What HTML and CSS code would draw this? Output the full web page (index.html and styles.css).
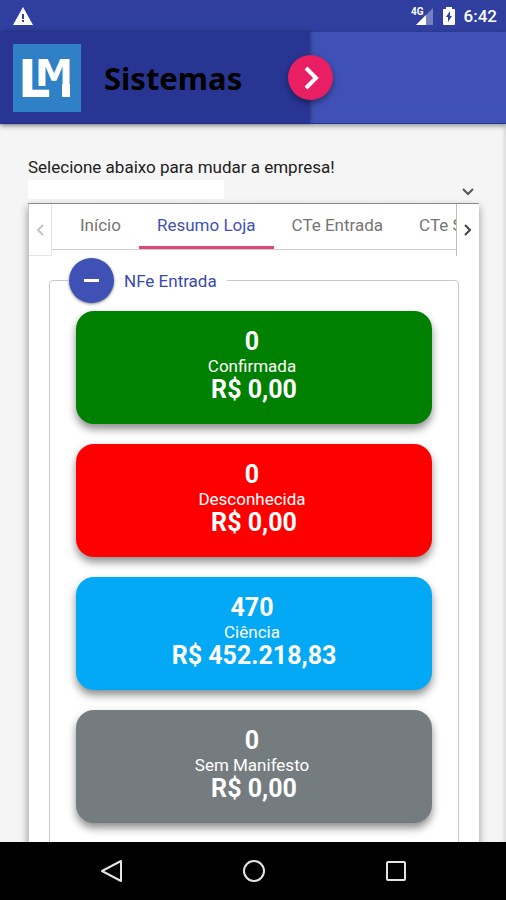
FILE: index.html
```html
<!DOCTYPE html>
<html lang="pt-BR">
<head>
<meta charset="utf-8">
<meta name="viewport" content="width=device-width, initial-scale=1">
<title>LM Sistemas</title>
<link rel="stylesheet" href="styles.css">
</head>
<body>
<div class="status">
  <svg class="status-warning" width="20" height="18" viewBox="0 0 20 18" aria-hidden="true"><path fill="#fff" d="M10 0 20 18H0z"/><path fill="#303f9f" d="M9 7h2v5H9zM9 13h2v2H9z"/></svg>
  <div class="status-right">
    <svg width="23" height="20" viewBox="0 0 23 20" aria-hidden="true"><path fill="#7580c0" d="M22 2v17H5z"/><path fill="#fff" d="M15 9v10H5z"/><text class="network" x="0" y="9">4G</text></svg>
    <svg width="12" height="18" viewBox="0 0 12 18" aria-hidden="true"><path fill="#fff" d="M3 0h6v2h2q1 0 1 1v14q0 1-1 1H1q-1 0-1-1V3q0-1 1-1h2z"/><path fill="#303f9f" d="M7 4 3 10h2v5l4-6H7z"/></svg>
    <span class="clock">6:42</span>
  </div>
</div>
<header class="bar">
  <div class="brand">
    <svg class="logo" width="68" height="68" viewBox="0 0 68 68" role="img" aria-label="LM"><path fill="#2f80c4" d="M0 0h68v68H0z"/><text class="logo-l" x="5" y="53">L</text><text class="logo-m" x="22" y="42">M</text><path fill="#fff" d="M49 40h8v13h-8z"/></svg>
    <span class="brand-name">Sistemas</span>
  </div>
  <button class="drawer-toggle" type="button" aria-label="Abrir menu"><svg width="24" height="24" viewBox="0 0 24 24" fill="none" stroke="#fff" stroke-width="4"><path d="m7 2 10 10L7 22"/></svg></button>
</header>
<main class="content">
  <div class="company">
    <label for="company">Selecione abaixo para mudar a empresa!</label>
    <div class="select-wrap">
      <span class="select-value"></span>
      <select id="company"><option></option></select>
      <svg width="12" height="8" viewBox="0 0 12 8" fill="none" stroke="#555" stroke-width="2" aria-hidden="true"><path d="m1 1 5 5 5-5"/></svg>
    </div>
  </div>
  <section class="panel">
    <nav class="tabs">
      <button class="pager prev" type="button" aria-label="Anterior" disabled><svg width="8" height="12" viewBox="0 0 8 12" fill="none" stroke="currentColor" stroke-width="2"><path d="M7 1 2 6l5 5"/></svg></button>
      <div class="tab-list">
        <button class="tab" type="button">Início</button>
        <button class="tab active" type="button">Resumo Loja</button>
        <button class="tab" type="button">CTe Entrada</button>
        <button class="tab" type="button">CTe Saída</button>
      </div>
      <button class="pager next" type="button" aria-label="Próximo"><svg width="8" height="12" viewBox="0 0 8 12" fill="none" stroke="currentColor" stroke-width="2"><path d="m1 1 5 5-5 5"/></svg></button>
    </nav>
    <fieldset class="group">
      <legend><button class="collapse" type="button" aria-label="Recolher"></button><span>NFe Entrada</span></legend>
      <div class="cards">
        <article class="card green"><strong>0</strong><span>Confirmada</span><strong>R$ 0,00</strong></article>
        <article class="card red"><strong>0</strong><span>Desconhecida</span><strong>R$ 0,00</strong></article>
        <article class="card blue"><strong>470</strong><span>Ciência</span><strong>R$ 452.218,83</strong></article>
        <article class="card gray"><strong>0</strong><span>Sem Manifesto</span><strong>R$ 0,00</strong></article>
      </div>
    </fieldset>
  </section>
</main>
<footer class="system-nav">
  <button type="button" aria-label="Voltar"><svg width="24" height="24" viewBox="0 0 24 24" fill="none" stroke="#e4e4e4" stroke-width="2" stroke-linejoin="round"><path d="M22 2v20L3 12z"/></svg></button>
  <button type="button" aria-label="Início"><svg width="24" height="24" viewBox="0 0 24 24" fill="none" stroke="#e4e4e4" stroke-width="2"><circle cx="13" cy="12" r="10"/></svg></button>
  <button type="button" aria-label="Recentes"><svg width="24" height="24" viewBox="0 0 24 24" fill="none" stroke="#e4e4e4" stroke-width="2"><rect x="4" y="3" width="18" height="18" rx="1"/></svg></button>
</footer>
</body>
</html>
```
FILE: styles.css
```css
* { box-sizing: border-box; }

body {
  margin: 0;
  height: 100vh;
  display: flex;
  flex-direction: column;
  overflow: hidden;
  background: #f5f5f5;
  color: #212121;
  font-family: Roboto, "Liberation Sans", sans-serif;
  font-size: 17px;
}

button {
  margin: 0;
  padding: 0;
  border: 0;
  background: none;
  color: inherit;
  font: inherit;
}

svg { display: block; flex: none; }

.status {
  flex: none;
  height: 32px;
  padding: 0 9px 0 13px;
  display: flex;
  align-items: center;
  justify-content: space-between;
  background: #303f9f;
  color: #fff;
}

.status-right { display: flex; align-items: center; gap: 9px; }
.network { font-size: 10px; font-weight: 700; fill: #fff; }
.clock { font-weight: 500; }

.bar {
  flex: none;
  height: 92px;
  display: flex;
  align-items: center;
  position: relative;
  z-index: 1;
  background: #3f51b5;
  border-bottom: 1px solid #2335a0;
  box-shadow: 0 2px 5px rgba(0, 0, 0, 0.4);
}

.brand {
  width: 310px;
  height: 100%;
  padding-left: 13px;
  display: flex;
  align-items: center;
  gap: 23px;
  background: #283593;
  box-shadow: 1px 0 4px rgba(0, 0, 0, 0.3);
}

.logo-l, .logo-m { font-family: "DejaVu Sans", sans-serif; font-weight: 700; fill: #fff; }
.logo-l { font-size: 51px; }
.logo-m { font-size: 38px; stroke: #2f80c4; stroke-width: 4px; paint-order: stroke; }

.brand-name {
  color: #000;
  font-family: "Noto Sans", "Open Sans", sans-serif;
  font-size: 31px;
  font-weight: 700;
}

.drawer-toggle {
  width: 45px;
  height: 45px;
  margin-left: -22px;
  display: grid;
  place-items: center;
  border-radius: 50%;
  background: #e91e63;
  box-shadow: 0 3px 6px rgba(0, 0, 0, 0.4);
}

.content {
  flex: 1;
  min-height: 0;
  overflow: hidden;
  padding: 32px 27px 0 28px;
  box-shadow: inset -4px 0 4px -2px rgba(0, 0, 0, 0.12);
}

.company label { display: block; padding-bottom: 2px; line-height: 22px; }

.select-wrap {
  height: 24px;
  display: grid;
  grid-template-columns: 44% 1fr 12px;
  padding-right: 5px;
  align-items: center;
  border-bottom: 1px solid #949494;
}

.select-value { grid-area: 1 / 1; height: 19px; align-self: start; background: #fff; }

.select-wrap select {
  grid-area: 1 / 1 / 2 / 4;
  height: 23px;
  appearance: none;
  border: 0;
  background: transparent;
  font: inherit;
}

.select-wrap svg { grid-area: 1 / 3; }

.panel {
  background: #fff;
  border-left: 1px solid #c8c8c8;
  box-shadow: 0 3px 8px rgba(0, 0, 0, 0.4);
}

.tabs { display: flex; align-items: flex-start; height: 54px; }

.pager {
  flex: none;
  width: 23px;
  height: 52px;
  display: grid;
  place-items: center;
  color: #424242;
}

.prev { color: #c4c4c4; border-right: 1px solid #e4e4e4; border-bottom: 1px solid #e4e4e4; }
.next { border-left: 1px solid #bdbdbd; }

.tab-list {
  flex: 1;
  min-width: 0;
  height: 46px;
  padding-left: 10px;
  display: flex;
  overflow: hidden;
  border-bottom: 1px solid #d0d0d0;
}

.tab {
  flex: none;
  height: 45px;
  padding: 0 18px 4px;
  color: #757575;
  white-space: nowrap;
}

.active { color: #3f51b5; box-shadow: inset 0 -3px #e0457b; }

.group {
  margin: 0 20px;
  padding: 8px 26px 60px;
  border: 1px solid #c8c8c8;
  border-radius: 4px;
  min-width: 0;
}

.group legend {
  margin-left: -8px;
  padding: 0 10px 0 1px;
  display: flex;
  align-items: center;
  gap: 10px;
  color: #3949ab;
}

.collapse {
  width: 45px;
  height: 45px;
  display: grid;
  place-items: center;
  border-radius: 50%;
  background: #3f51b5;
  box-shadow: 0 1px 3px rgba(0, 0, 0, 0.5);
}

.collapse::before { content: ""; width: 15px; height: 3px; background: #fff; }

.cards { display: grid; gap: 20px; }

.card {
  padding: 19px 16px 22px;
  display: flex;
  flex-direction: column;
  align-items: center;
  border-radius: 18px;
  color: #fff;
  line-height: 24px;
  box-shadow: 0 5px 8px rgba(0, 0, 0, 0.45);
}

.card strong { font-size: 25px; font-weight: 700; }
.card > :not(:last-child) { padding-right: 4px; }

.green { background: #008000; }
.red { background: #f00; }
.blue { background: #03a9f4; }
.gray { background: #757c80; }

.system-nav {
  flex: none;
  height: 58px;
  display: flex;
  align-items: center;
  justify-content: center;
  gap: 118px;
  background: #000;
}
```
